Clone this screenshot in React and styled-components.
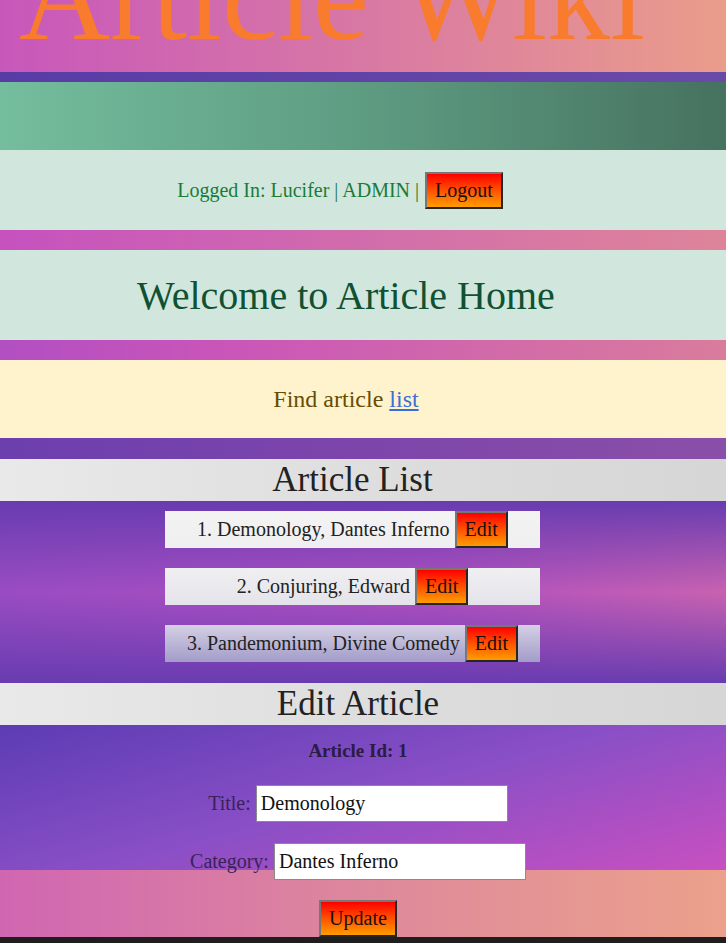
import React from "react";
import styled, { createGlobalStyle } from "styled-components";

const GlobalStyle = createGlobalStyle`
  html, body {
    margin: 0;
    padding: 0;
    background: #1e1e1e;
  }
  body {
    font-family: "Liberation Serif", "Times New Roman", serif;
    color: #222;
  }
`;

const Page = styled.div`
  display: flex;
  flex-direction: column;
`;

const Header = styled.header`
  height: 72px;
  overflow: hidden;
  background: linear-gradient(90deg, #c857bb 0%, #d878a4 50%, #ea9d8a 100%);
`;

const Title = styled.h1`
  margin: -66px 0 0;
  padding-left: 19px;
  font-size: 126px;
  font-weight: normal;
  line-height: 1;
  white-space: nowrap;
  color: #f87b2e;
`;

const Strip = styled.div`
  height: ${(p) => p.$h}px;
  background: ${(p) => p.$bg};
`;

const Panel = styled.div`
  height: ${(p) => p.$h}px;
  display: flex;
  align-items: center;
  justify-content: center;
  padding-right: ${(p) => p.$shift || 0}px;
  background: ${(p) => p.$bg};
  color: ${(p) => p.$color};
  font-size: ${(p) => p.$size}px;
`;

const Link = styled.a`
  color: #3b6fd6;
  text-decoration: underline;
  margin-left: 6px;
`;

const RedButton = styled.button`
  font-family: "Liberation Serif", "Times New Roman", serif;
  font-size: 20px;
  line-height: 23px;
  color: #1a0d0d;
  padding: 5px 8px;
  margin: 0;
  border: 2px solid;
  border-color: #777 #262626 #262626 #777;
  background: linear-gradient(180deg, #ff0000 0%, #ff4a00 45%, #ff9d00 100%);
  cursor: pointer;
`;

const LoggedText = styled.span`
  margin-right: 6px;
`;

const SectionHead = styled.h2`
  margin: 0;
  height: 42px;
  line-height: 41px;
  text-align: center;
  padding-right: ${(p) => p.$shift || 0}px;
  font-size: 35px;
  font-weight: normal;
  color: #222;
  background: linear-gradient(90deg, #e9e9e9 0%, #dcdcdc 60%, #d6d6d6 100%);
`;

const ListArea = styled.div`
  height: 182px;
  box-sizing: border-box;
  padding: 10px 0 0 165px;
  display: flex;
  flex-direction: column;
  gap: 20px;
  background:
    linear-gradient(180deg, rgba(104, 60, 176, 1) 0%, rgba(104, 60, 176, 0) 50%, rgba(104, 60, 176, 1) 100%),
    linear-gradient(90deg, #9a4cc2 0%, #b050c0 60%, #c862b0 100%);
`;

const Row = styled.div`
  width: 375px;
  height: 37px;
  display: flex;
  align-items: center;
  justify-content: center;
  font-size: 20px;
  color: #222;
  background: ${(p) => p.$bg};
`;

const RowText = styled.span`
  margin-right: 5px;
`;

const FormArea = styled.div`
  height: 212px;
  box-sizing: border-box;
  padding: 14px 10px 0 0;
  display: flex;
  flex-direction: column;
  align-items: center;
  background:
    linear-gradient(165deg, #5c3cb4 0%, #8a4fc6 50%, #c850c0 100%) top / 100% 145px no-repeat,
    linear-gradient(90deg, #d066b2 0%, #df8b9a 55%, #eba18b 100%);
`;

const IdLine = styled.div`
  font-size: 19px;
  font-weight: bold;
  line-height: 23px;
  color: #2b1b45;
  margin-bottom: 23px;
`;

const Field = styled.label`
  display: flex;
  align-items: center;
  gap: 5px;
  font-size: 20px;
  color: #3a2258;
  margin-bottom: ${(p) => p.$mb}px;
`;

const Input = styled.input`
  width: 252px;
  height: 37px;
  box-sizing: border-box;
  padding: 0 4px;
  border: 1px solid #8a8a8a;
  font-family: "Liberation Serif", "Times New Roman", serif;
  font-size: 20px;
  color: #111;
  background: #fff;
`;

const articles = [
  { id: 1, title: "Demonology", category: "Dantes Inferno", bg: "linear-gradient(180deg, #f3f3f3, #efeff1)" },
  { id: 2, title: "Conjuring", category: "Edward", bg: "linear-gradient(180deg, #f0f0f2, #e3e3ea)" },
  { id: 3, title: "Pandemonium", category: "Divine Comedy", bg: "linear-gradient(180deg, #d4d0e4, #a39cc9)" },
];

export default function App() {
  return (
    <Page>
      <GlobalStyle />
      <Header>
        <Title>Article Wiki</Title>
      </Header>
      <Strip $h={10} $bg="linear-gradient(90deg, #583ca6, #6a4aa8)" />
      <Strip $h={68} $bg="linear-gradient(90deg, #74bd9d 0%, #5e9c82 50%, #46725f 100%)" />
      <Panel $h={80} $bg="#d1e7dd" $color="#1b7b36" $size={20} $shift={46}>
        <LoggedText>Logged In: Lucifer | ADMIN |</LoggedText>
        <RedButton>Logout</RedButton>
      </Panel>
      <Strip $h={20} $bg="linear-gradient(90deg, #c651bf, #d472a8 60%, #de8499)" />
      <Panel $h={90} $bg="#d1e7dd" $color="#0f5132" $size={40} $shift={34}>
        Welcome to Article Home
      </Panel>
      <Strip $h={20} $bg="linear-gradient(90deg, #b24fc2, #c955b9 30%, #d97c9c)" />
      <Panel $h={78} $bg="#fff3cd" $color="#664d03" $size={24} $shift={34}>
        Find article <Link href="#list">list</Link>
      </Panel>
      <Strip $h={21} $bg="linear-gradient(90deg, #6c3fae, #7d45ab 50%, #8a4fa8)" />
      <SectionHead $shift={21}>Article List</SectionHead>
      <ListArea>
        {articles.map((a) => (
          <Row key={a.id} $bg={a.bg}>
            <RowText>
              {a.id}. {a.title}, {a.category}
            </RowText>
            <RedButton>Edit</RedButton>
          </Row>
        ))}
      </ListArea>
      <SectionHead $shift={10}>Edit Article</SectionHead>
      <FormArea>
        <IdLine>Article Id: 1</IdLine>
        <Field $mb={21}>
          Title:
          <Input defaultValue="Demonology" />
        </Field>
        <Field $mb={20}>
          Category:
          <Input defaultValue="Dantes Inferno" />
        </Field>
        <RedButton>Update</RedButton>
      </FormArea>
    </Page>
  );
}
